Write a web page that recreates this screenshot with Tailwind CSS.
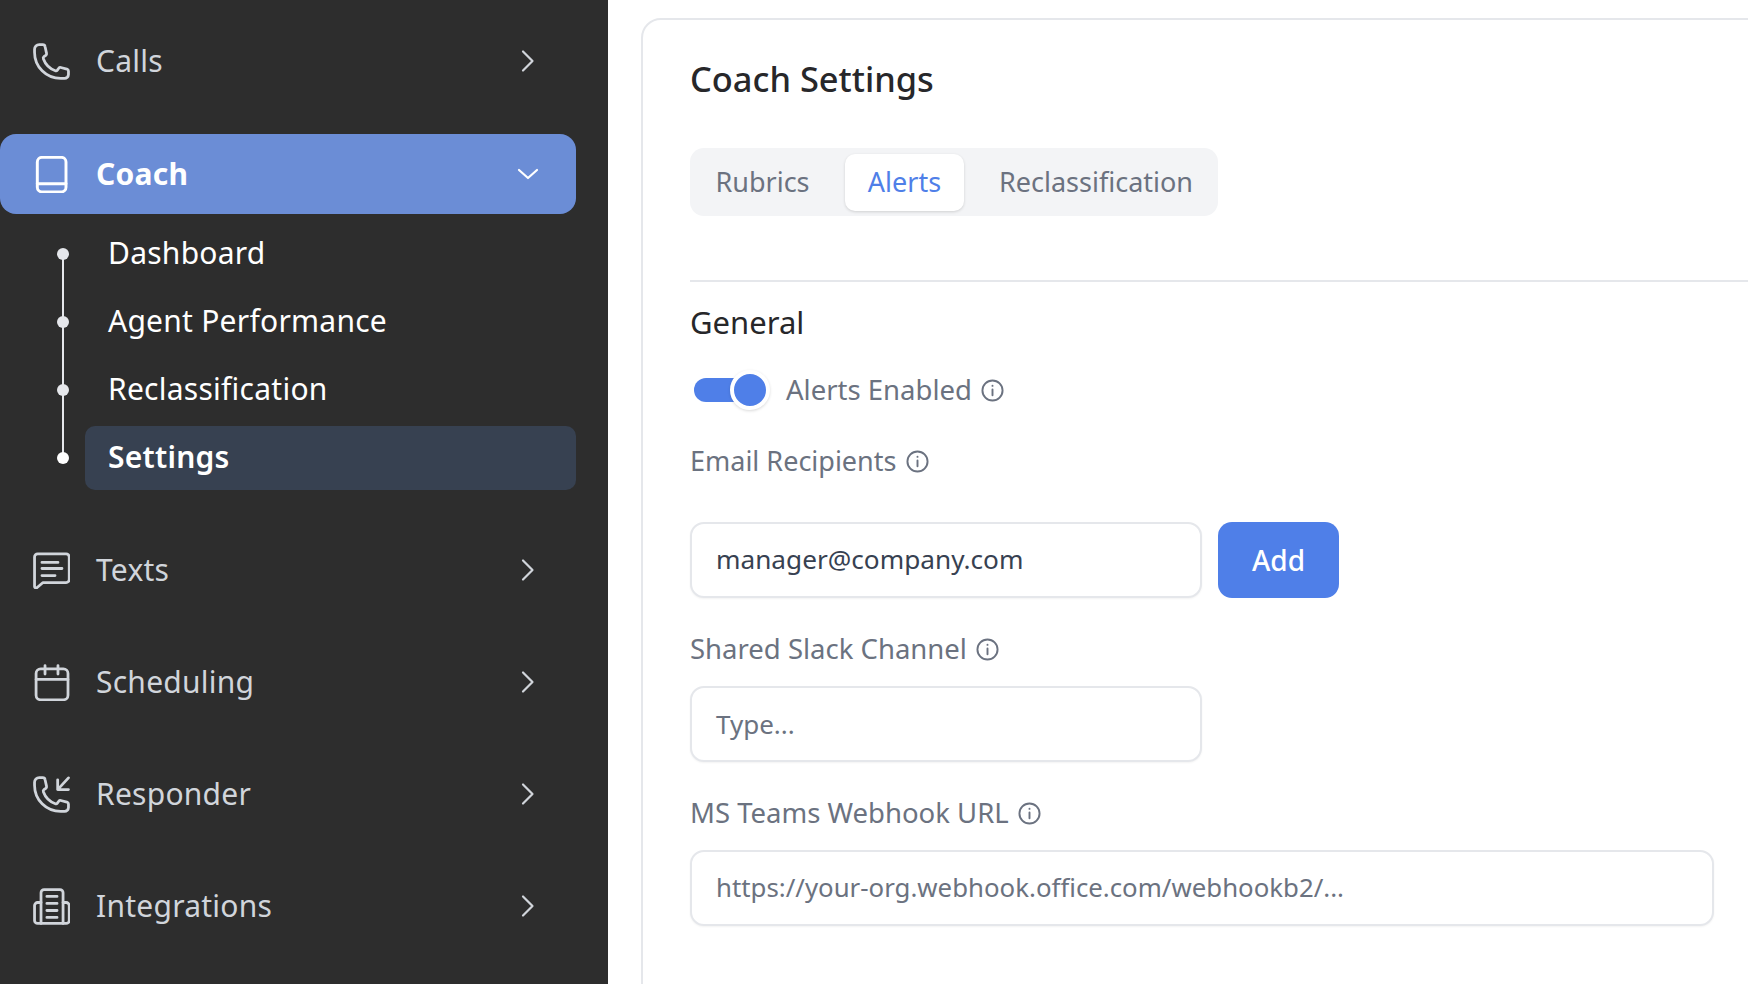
<!DOCTYPE html>
<html lang="en">
<head>
    <meta charset="UTF-8">
    <meta name="viewport" content="width=device-width, initial-scale=1.0">
    <title>Coach Settings</title>
    <script src="https://cdn.jsdelivr.net/npm/@tailwindcss/browser@4"></script>
</head>
<body class="bg-white overflow-hidden font-['Noto_Sans',sans-serif]">
    <div class="flex h-[984px] w-[1748px] overflow-hidden">
        <!-- Sidebar -->
        <aside class="w-[608px] shrink-0 bg-[#2d2d2d] pt-[21px] pr-[32px] text-[30px] tracking-[0.25px] text-[#d1d5db]">
            <nav>
                <a href="#" class="flex h-[80px] items-center pl-[33px] pr-[36px]">
                    <svg class="w-[37px] h-[37px] shrink-0" viewBox="0 0 24 24" fill="none" stroke="currentColor" stroke-width="1.8" stroke-linecap="round" stroke-linejoin="round"><path d="M1 6c0 9.5 7.5 17 17 17h2.5a2.5 2.5 0 0 0 2.5-2.5v-2.3c0-.6-.4-1.1-1-1.3l-4-1c-.5-.1-1 .1-1.3.5l-.9 1.2c-.3.4-.8.6-1.3.4a13 13 0 0 1-7.8-7.8c-.2-.5 0-1 .4-1.3l1.2-.9c.4-.3.6-.8.5-1.3l-1-4.4A1.5 1.5 0 0 0 6.3 1H4a3 3 0 0 0-3 3v2Z"/></svg>
                    <span class="ml-[26px] flex-1 pb-[2px]">Calls</span>
                    <svg class="w-[24px] h-[24px]" viewBox="0 0 24 24" fill="none" stroke="currentColor" stroke-width="2.2" stroke-linecap="round" stroke-linejoin="round"><path d="M7 2.5l9.5 9.5-9.5 9.5"/></svg>
                </a>
                <a href="#" class="mt-[33px] flex h-[80px] items-center rounded-[16px] bg-[#6b8dd6] pl-[33px] pr-[36px] font-bold text-white">
                    <svg class="w-[37px] h-[37px] shrink-0" viewBox="0 0 24 24" fill="none" stroke="currentColor" stroke-width="1.9" stroke-linecap="round" stroke-linejoin="round"><rect x="2.8" y="0.9" width="18.6" height="22.4" rx="3"/><path d="M2.8 18h18.6"/></svg>
                    <span class="ml-[26px] flex-1 pb-[2px]">Coach</span>
                    <svg class="w-[24px] h-[24px]" viewBox="0 0 24 24" fill="none" stroke="currentColor" stroke-width="2.2" stroke-linecap="round" stroke-linejoin="round"><path d="M3 8l9 8 9-8"/></svg>
                </a>
                <!-- Coach sub menu -->
                <div class="relative mt-[8px] flex flex-col gap-[4px] pl-[85px] text-white">
                    <div class="absolute left-[62px] top-[32px] h-[204px] w-[2px] bg-[#e5e7eb]"></div>
                    <a href="#" class="relative flex h-[64px] items-center px-[23px] pb-[3px]"><span class="absolute left-[-28px] top-[26px] h-[12px] w-[12px] rounded-full bg-[#e5e7eb]"></span>Dashboard</a>
                    <a href="#" class="relative flex h-[64px] items-center px-[23px] pb-[3px]"><span class="absolute left-[-28px] top-[26px] h-[12px] w-[12px] rounded-full bg-[#e5e7eb]"></span>Agent Performance</a>
                    <a href="#" class="relative flex h-[64px] items-center px-[23px] pb-[3px]"><span class="absolute left-[-28px] top-[26px] h-[12px] w-[12px] rounded-full bg-[#e5e7eb]"></span>Reclassification</a>
                    <a href="#" class="relative flex h-[64px] items-center rounded-[10px] bg-[#374151] px-[23px] pb-[3px] font-semibold"><span class="absolute left-[-28px] top-[26px] h-[12px] w-[12px] rounded-full bg-white"></span>Settings</a>
                </div>
                <a href="#" class="mt-[40px] flex h-[80px] items-center pl-[33px] pr-[36px]">
                    <svg class="w-[37px] h-[37px] shrink-0" viewBox="0 0 24 24" fill="none" stroke="currentColor" stroke-width="1.8" stroke-linecap="round" stroke-linejoin="round"><path d="M1 3.2a2 2 0 0 1 2-2h18.5a2 2 0 0 1 2 2v14.6a2 2 0 0 1-2 2H6.5l-4 3.4c-.6.4-1.5 0-1.5-.8V3.2Z"/><path d="M5.8 6.8h10.4M5.8 10.7h13M5.8 15.3h8.5"/></svg>
                    <span class="ml-[26px] flex-1 pb-[2px]">Texts</span>
                    <svg class="w-[24px] h-[24px]" viewBox="0 0 24 24" fill="none" stroke="currentColor" stroke-width="2.2" stroke-linecap="round" stroke-linejoin="round"><path d="M7 2.5l9.5 9.5-9.5 9.5"/></svg>
                </a>
                <a href="#" class="mt-[32px] flex h-[80px] items-center pl-[33px] pr-[36px]">
                    <svg class="w-[37px] h-[37px] shrink-0" viewBox="0 0 24 24" fill="none" stroke="currentColor" stroke-width="1.8" stroke-linecap="round" stroke-linejoin="round"><rect x="2" y="3.2" width="20.7" height="20" rx="3"/><path d="M2 10h20.7M7.8 1v5.5M16.2 1v5.5"/></svg>
                    <span class="ml-[26px] flex-1 pb-[2px]">Scheduling</span>
                    <svg class="w-[24px] h-[24px]" viewBox="0 0 24 24" fill="none" stroke="currentColor" stroke-width="2.2" stroke-linecap="round" stroke-linejoin="round"><path d="M7 2.5l9.5 9.5-9.5 9.5"/></svg>
                </a>
                <a href="#" class="mt-[32px] flex h-[80px] items-center pl-[33px] pr-[36px]">
                    <svg class="w-[37px] h-[37px] shrink-0" viewBox="0 0 24 24" fill="none" stroke="currentColor" stroke-width="1.8" stroke-linecap="round" stroke-linejoin="round"><path d="M1 6c0 9.5 7.5 17 17 17h2.5a2.5 2.5 0 0 0 2.5-2.5v-2.3c0-.6-.4-1.1-1-1.3l-4-1c-.5-.1-1 .1-1.3.5l-.9 1.2c-.3.4-.8.6-1.3.4a13 13 0 0 1-7.8-7.8c-.2-.5 0-1 .4-1.3l1.2-.9c.4-.3.6-.8.5-1.3l-1-4.4A1.5 1.5 0 0 0 6.3 1H4a3 3 0 0 0-3 3v2Z"/><path d="M23 1.2l-7 7.6M16 2.5v6.3h7"/></svg>
                    <span class="ml-[26px] flex-1 pb-[2px]">Responder</span>
                    <svg class="w-[24px] h-[24px]" viewBox="0 0 24 24" fill="none" stroke="currentColor" stroke-width="2.2" stroke-linecap="round" stroke-linejoin="round"><path d="M7 2.5l9.5 9.5-9.5 9.5"/></svg>
                </a>
                <a href="#" class="mt-[32px] flex h-[80px] items-center pl-[33px] pr-[36px]">
                    <svg class="w-[37px] h-[37px] shrink-0" viewBox="0 0 24 24" fill="none" stroke="currentColor" stroke-width="1.8" stroke-linecap="round" stroke-linejoin="round"><path d="M5.2 23V3a2 2 0 0 1 2-2h10.3a2 2 0 0 1 2 2v20"/><path d="M5.2 9.4H3a2 2 0 0 0-2 2V21a2 2 0 0 0 2 2h18.5a2 2 0 0 0 2-2v-9.6a2 2 0 0 0-2-2h-2"/><path d="M9 5.5h6.6M9 10h6.6M9 14.6h6.6M9 19.1h6.6"/></svg>
                    <span class="ml-[26px] flex-1 pb-[2px]">Integrations</span>
                    <svg class="w-[24px] h-[24px]" viewBox="0 0 24 24" fill="none" stroke="currentColor" stroke-width="2.2" stroke-linecap="round" stroke-linejoin="round"><path d="M7 2.5l9.5 9.5-9.5 9.5"/></svg>
                </a>
            </nav>
        </aside>

        <!-- Main Content -->
        <main class="flex-1 pl-[33px] pt-[18px]">
            <div class="h-[1100px] w-[1200px] rounded-tl-[20px] border-2 border-[#e5e7eb] bg-white pl-[47px] pt-[31px] text-[#6b7280]">
                <h1 class="h-[56px] text-[34.4px] font-medium leading-[56px] text-[#27272a]">Coach Settings</h1>
                <div class="mt-[41px] flex h-[68px] w-[528px] items-center rounded-[14px] bg-[#f3f4f6] pl-[5px] text-[27px]">
                    <button class="h-[57px] w-[135px]">Rubrics</button>
                    <button class="ml-[15px] h-[57px] w-[119px] rounded-[10px] bg-white text-[#4f7fe8] shadow-[0_1px_3px_rgba(0,0,0,0.15)]">Alerts</button>
                    <button class="ml-[14px] h-[57px] w-[236px]">Reclassification</button>
                </div>
                <div class="mt-[64px] w-[1060px] border-t-2 border-[#e5e7eb]"></div>
                <h2 class="mt-[21px] text-[31px] font-normal leading-[38px] text-[#27272a]">General</h2>

                <div class="mt-[29px] flex h-[40px] items-center text-[27.5px]">
                    <div class="relative ml-[4px] h-[24px] w-[69px]">
                        <div class="h-[24px] w-[60px] rounded-full bg-[#4f7fe8]"></div>
                        <div class="absolute left-[36px] top-[-8px] h-[40px] w-[40px] rounded-full border-[4px] border-white bg-[#4f7fe8] shadow-[0_1px_3px_rgba(0,0,0,0.15)]"></div>
                    </div>
                    <span class="ml-[23px]">Alerts Enabled</span>
                    <svg class="ml-[9px] h-[23px] w-[23px]" viewBox="0 0 24 24" fill="none" stroke="currentColor" stroke-width="2" stroke-linecap="round"><circle cx="12" cy="12" r="10.5"/><path d="M12 11v6M12 7v.2"/></svg>
                </div>

                <div class="mt-[33px] flex h-[36px] items-center text-[27px]">
                    <span>Email Recipients</span>
                    <svg class="ml-[10px] h-[23px] w-[23px]" viewBox="0 0 24 24" fill="none" stroke="currentColor" stroke-width="2" stroke-linecap="round"><circle cx="12" cy="12" r="10.5"/><path d="M12 11v6M12 7v.2"/></svg>
                </div>
                <div class="mt-[43px] flex gap-[16px]">
                    <div class="flex h-[76px] w-[512px] items-center rounded-[14px] border-2 border-[#e5e7eb] bg-white pl-[24px] pb-[1px] text-[26.2px] text-[#374151] shadow-[0_1px_2px_rgba(0,0,0,0.05)]">manager@company.com</div>
                    <button class="h-[76px] w-[121px] rounded-[14px] bg-[#4f7fe8] text-[28px] font-medium text-white">Add</button>
                </div>

                <div class="mt-[33px] flex h-[36px] items-center text-[27.5px]">
                    <span>Shared Slack Channel</span>
                    <svg class="ml-[9px] h-[23px] w-[23px]" viewBox="0 0 24 24" fill="none" stroke="currentColor" stroke-width="2" stroke-linecap="round"><circle cx="12" cy="12" r="10.5"/><path d="M12 11v6M12 7v.2"/></svg>
                </div>
                <div class="mt-[19px] flex h-[76px] w-[512px] items-center rounded-[14px] border-2 border-[#e5e7eb] bg-white pl-[24px] text-[26px] shadow-[0_1px_2px_rgba(0,0,0,0.05)]">Type...</div>

                <div class="mt-[33px] flex h-[36px] items-center text-[27.5px]">
                    <span>MS Teams Webhook URL</span>
                    <svg class="ml-[9px] h-[23px] w-[23px]" viewBox="0 0 24 24" fill="none" stroke="currentColor" stroke-width="2" stroke-linecap="round"><circle cx="12" cy="12" r="10.5"/><path d="M12 11v6M12 7v.2"/></svg>
                </div>
                <div class="mt-[19px] flex h-[76px] w-[1024px] items-center rounded-[14px] border-2 border-[#e5e7eb] bg-white pl-[24px] pb-[1px] text-[25.8px] shadow-[0_1px_2px_rgba(0,0,0,0.05)]">https://your-org.webhook.office.com/webhookb2/...</div>
            </div>
        </main>
    </div>
</body>
</html>
